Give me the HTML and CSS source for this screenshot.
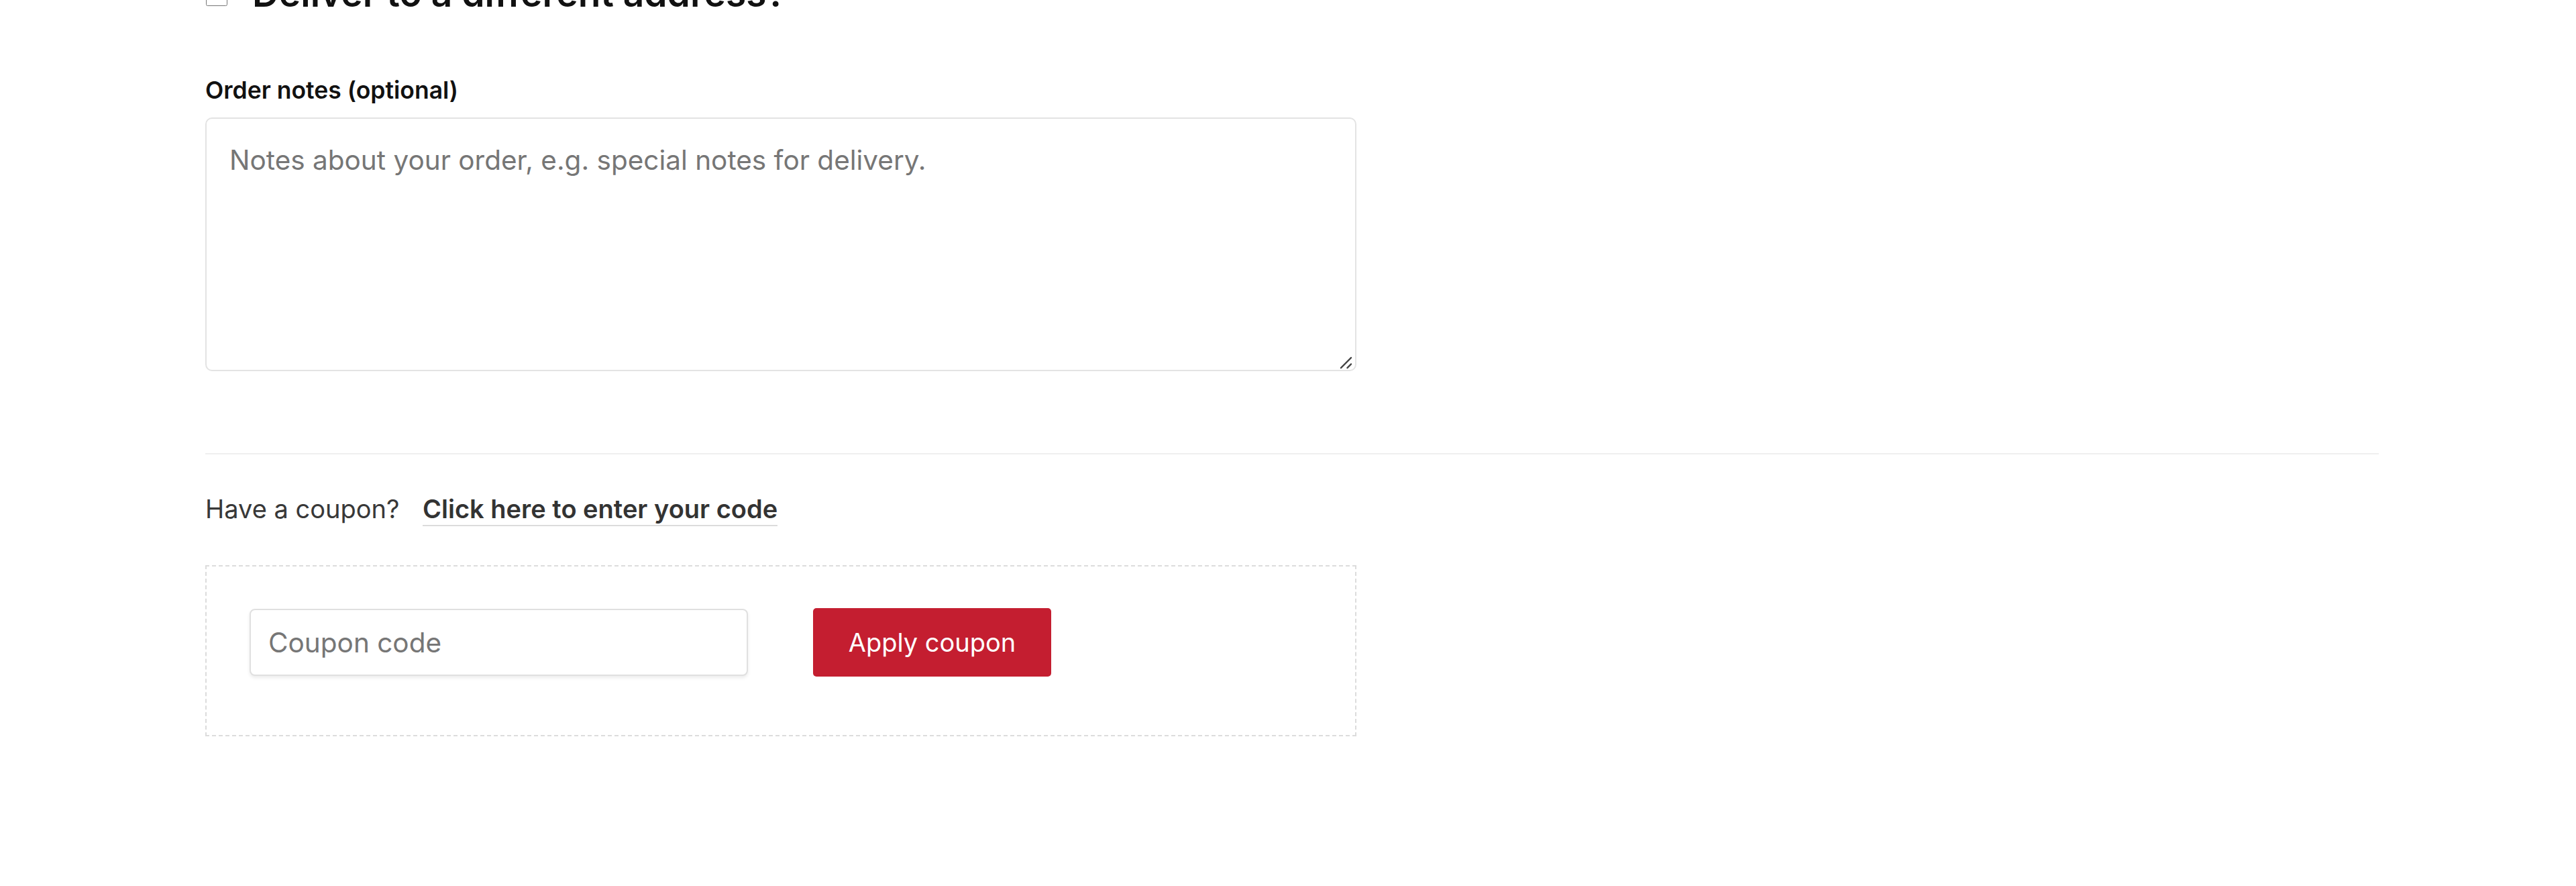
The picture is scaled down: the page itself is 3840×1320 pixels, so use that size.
FILE: index.html
```html
<!DOCTYPE html>
<html lang="en">
<head>
<meta charset="utf-8">
<title>Checkout</title>
<meta name="viewport" content="width=device-width,initial-scale=1">
<link rel="stylesheet" href="styles.css">
</head>
<body>

<main class="checkout">
  <!-- additional fields -->
  <div class="form-col">
    <h3 class="ship-toggle">
      <label><input type="checkbox" name="ship_to_different_address"><span>Deliver to a different address?</span></label>
    </h3>

    <p class="field">
      <label for="order_comments">Order notes (optional)</label>
      <span class="textarea-wrap">
        <textarea id="order_comments" name="order_comments" placeholder="Notes about your order, e.g. special notes for delivery."></textarea>
        <svg class="grip" viewBox="0 0 20 20" aria-hidden="true">
          <path d="M2 18 L18 2 M12 18 L18 12" stroke="#444" stroke-width="2.4" stroke-linecap="round" fill="none"/>
        </svg>
      </span>
    </p>
  </div>

  <hr class="sep">

  <!-- coupon -->
  <div class="coupon-toggle">Have a coupon? <a href="#" class="show-coupon">Click here to enter your code</a></div>

  <form class="coupon" onsubmit="return false">
    <input type="text" name="coupon_code" placeholder="Coupon code" aria-label="Coupon code">
    <button type="submit">Apply coupon</button>
  </form>
</main>

</body>
</html>
```

FILE: styles.css
```css
:root{
  --text:#111;--body:#383838;--muted:#767676;--line:#e3e3e3;--accent:#c41e30;
  --col:1716px
}
*{box-sizing:border-box}
body{margin:0;background:#fff;color:var(--body);font-family:Inter,"Noto Sans",sans-serif;overflow:hidden}
.checkout{width:3240px;margin-left:306px}

/* ship to different address */
.ship-toggle{margin:-43px 0 0;font-size:55px;font-weight:600;line-height:1.2;color:var(--text)}
.ship-toggle label{display:flex;align-items:center;gap:37px}
.ship-toggle input{width:32px;height:32px;margin:6px 0 0 1px}

/* order notes */
.field{margin:86px 0 0;width:var(--col)}
.field label{display:block;font-size:35.5px;font-weight:600;line-height:51px;color:var(--text);margin-bottom:15px}
.textarea-wrap{position:relative;display:block}
.field textarea{display:block;width:100%;height:378px;padding:33px 34px;border:2px solid var(--line);border-radius:10px;font:40.5px/1.45 Inter,sans-serif;color:var(--body);resize:none;outline:none}
.field textarea::placeholder{color:var(--muted)}
.grip{position:absolute;right:6px;bottom:3px;width:19px;height:19px}

.sep{margin:122px 0 0;border:0;border-top:2px solid #efefef;height:0}

/* coupon */
.coupon-toggle{margin-top:54px;font-size:38px;line-height:54px;color:var(--body)}
.show-coupon{margin-left:24px;font-weight:600;color:#333;text-decoration:none;border-bottom:2px solid #dcdcdc;padding-bottom:1px}
.coupon{margin-top:57px;width:var(--col);border:2px dashed #dcdcdc;padding:62px 64px 87px;display:flex;align-items:center;gap:97px}
.coupon input{width:743px;height:100px;border:2px solid #e0e0e0;border-radius:8px;padding:0 26px;font:40.5px Inter,sans-serif;color:var(--body);box-shadow:0 3px 5px rgba(0,0,0,.08);outline:none}
.coupon input::placeholder{color:var(--muted)}
.coupon button{width:355px;height:102px;border:0;border-radius:5px;background:var(--accent);color:#fff;font:38px Inter,sans-serif;cursor:pointer}
```
